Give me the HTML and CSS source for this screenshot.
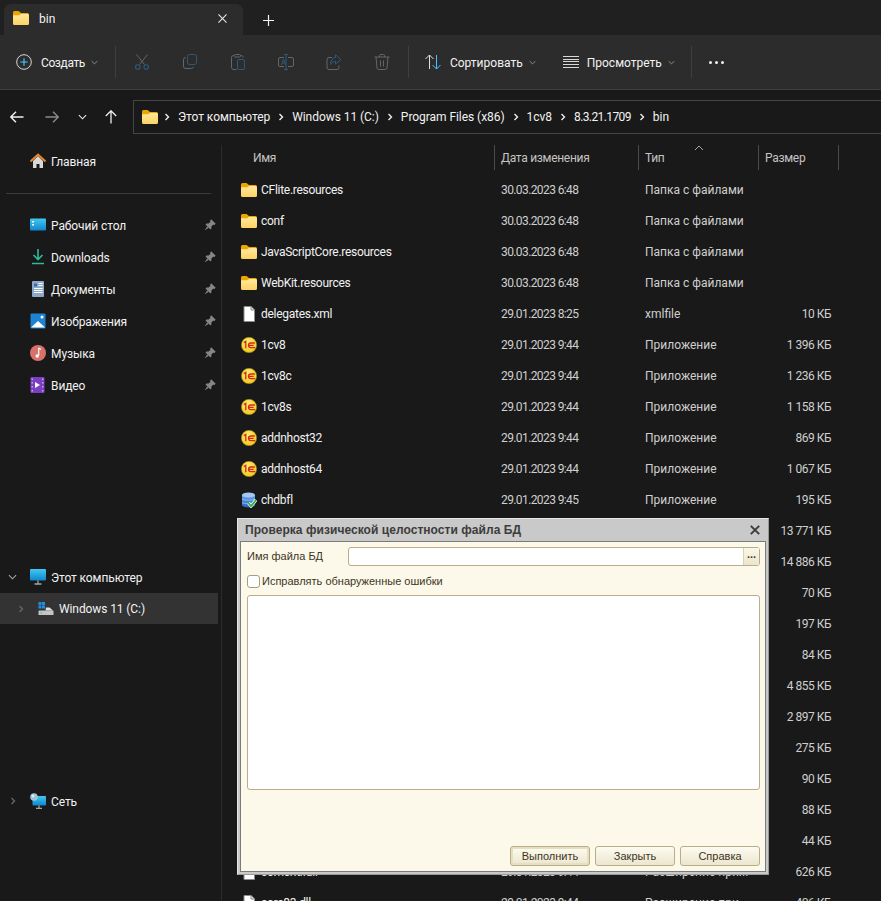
FILE: index.html
```html
<!DOCTYPE html>
<html lang="ru">
<head>
    <meta charset="UTF-8">
    <meta name="viewport" content="width=device-width, initial-scale=1.0">
    <title>bin - Проводник</title>
    <link rel="stylesheet" href="styles.css">
</head>
<body>
    <!-- shared icons -->
    <svg class="sprite" aria-hidden="true">
        <defs>
            <linearGradient id="folderFill" x1="0" y1="0" x2="0" y2="1">
                <stop offset="0" stop-color="#ffe99c"/>
                <stop offset="1" stop-color="#fdd263"/>
            </linearGradient>
            <radialGradient id="coinFill" cx="0.45" cy="0.35" r="0.7">
                <stop offset="0" stop-color="#fff27a"/>
                <stop offset="1" stop-color="#f2c412"/>
            </radialGradient>
            <linearGradient id="dbFill" x1="0" y1="0" x2="0" y2="1">
                <stop offset="0" stop-color="#6fa6ec"/>
                <stop offset="1" stop-color="#2b62c0"/>
            </linearGradient>
            <linearGradient id="screenFill" x1="0" y1="0" x2="0" y2="1">
                <stop offset="0" stop-color="#43c8f0"/>
                <stop offset="1" stop-color="#0f86cf"/>
            </linearGradient>
        </defs>
        <symbol id="i-folder" viewBox="0 0 16 14">
            <path d="M0 1.5A1.5 1.5 0 0 1 1.5 0h4L8 2h6.5A1.5 1.5 0 0 1 16 3.5V5H0z" fill="#eba700"/>
            <path d="M0 4.2h6L8 3h6.5A1.5 1.5 0 0 1 16 4.5v8a1.5 1.5 0 0 1-1.5 1.5h-13A1.5 1.5 0 0 1 0 12.5z" fill="url(#folderFill)"/>
        </symbol>
        <symbol id="i-file" viewBox="0 0 16 16">
            <path d="M3 .5h7l3.5 3.5v11.5H3z" fill="#fff" stroke="#8a8a8a"/>
            <path d="M10 .5V4h3.5" fill="#ddd" stroke="#8a8a8a"/>
        </symbol>
        <symbol id="i-onec" viewBox="0 0 16 16">
            <circle cx="8" cy="8" r="7.7" fill="url(#coinFill)" stroke="#8f7a1a" stroke-width=".5"/>
            <path d="M2.800 5.600 4.800 4.400v6.800" fill="none" stroke="#d8261c" stroke-width="1.300"/>
            <path d="M13.800 6H9.800a2.300 2.300 0 0 0 0 4.600h4.400M8.200 8.300h4.400" fill="none" stroke="#d8261c" stroke-width="1.300"/>
        </symbol>
        <symbol id="i-db" viewBox="0 0 16 16">
            <path d="M1 3v10c0 1.400 3 2.400 6.500 2.400S14 14.400 14 13V3z" fill="url(#dbFill)"/>
            <ellipse cx="7.500" cy="3" rx="6.500" ry="2.500" fill="#a5c8f2"/>
            <path d="M1 7c1.500 1.600 11.500 1.600 13 0M1 10.500c1.500 1.600 11.500 1.600 13 0" fill="none" stroke="#a5c8f2" stroke-width=".7"/>
            <path d="m7.500 11 2.500 3 5-6" fill="none" stroke="#fff" stroke-width="3.200"/>
            <path d="m7.500 11 2.500 3 5-6" fill="none" stroke="#27b13b" stroke-width="1.800"/>
        </symbol>
        <symbol id="i-pin" viewBox="0 0 12 12">
            <path d="M7.200 .3 11.700 4.800 10.300 5.900 9.100 5.700 7.400 7.500 7.400 9.600 6.400 10.500 1.500 5.600 2.400 4.600 4.500 4.600 6.300 2.900 6.100 1.700z" fill="#858585"/>
            <path d="M3.300 7.300.5 11.500 4.700 8.700z" fill="#858585"/>
        </symbol>
        <symbol id="i-chev" viewBox="0 0 6 8">
            <path d="m1.500 1 3 3-3 3" fill="none" stroke="currentColor" stroke-width="1.400"/>
        </symbol>
        <symbol id="i-down" viewBox="0 0 10 6">
            <path d="m1 1 4 4 4-4" fill="none" stroke="currentColor" stroke-width="1.200"/>
        </symbol>
    </svg>

    <div class="tabbar">
        <div class="tab">
            <svg class="tab-icon"><use href="#i-folder"/></svg>
            <span class="tab-title">bin</span>
            <svg class="tab-close" viewBox="0 0 10 10"><path d="m.5.500 9 9m0-9-9 9" stroke="#e8e8e8" stroke-width="1.200"/></svg>
        </div>
        <svg class="tab-add" viewBox="0 0 11 11"><path d="M5.500 0v11M0 5.500h11" stroke="#f2f2f2" stroke-width="1.200"/></svg>
    </div>

    <div class="toolbar">
        <div class="tool tool-new">
            <svg class="tool-icon" viewBox="0 0 16 16">
                <circle cx="8" cy="8" r="7.300" fill="none" stroke="#d8d8d8" stroke-width="1"/>
                <path d="M8 4.200v7.600M4.200 8h7.600" stroke="#4cc2ff" stroke-width="1.200"/>
            </svg>
            <span>Создать</span>
            <svg class="drop"><use href="#i-down"/></svg>
        </div>
        <div class="tool-sep"></div>
        <div class="tool-group">
            <svg class="tool-icon" viewBox="0 0 16 16">
                <path d="M2.500 .5 10.500 10.500M13.500 .5 5.500 10.500" fill="none" stroke="#666" stroke-width="1"/>
                <circle cx="3.800" cy="13" r="2.300" fill="none" stroke="#2c5a7c" stroke-width="1.100"/>
                <circle cx="12.200" cy="13" r="2.300" fill="none" stroke="#2c5a7c" stroke-width="1.100"/>
            </svg>
            <svg class="tool-icon" viewBox="0 0 16 16">
                <rect x="5.500" y=".5" width="9" height="10" rx="2" fill="none" stroke="#2c5a7c"/>
                <path d="M3.500 3.500a2 2 0 0 0-2 2v7a2 2 0 0 0 2 2h6a2 2 0 0 0 1.800-1.500" fill="none" stroke="#666"/>
            </svg>
            <svg class="tool-icon" viewBox="0 0 16 16">
                <path d="M4.500 1.500h-1a2 2 0 0 0-2 2v10a2 2 0 0 0 2 2h3M10.500 1.500h1a2 2 0 0 1 1.500 1v1" fill="none" stroke="#666"/>
                <rect x="4.500" y=".5" width="6" height="2.500" rx="1" fill="none" stroke="#666"/>
                <rect x="7.500" y="5.500" width="7" height="10" rx="1.500" fill="none" stroke="#2c5a7c"/>
            </svg>
            <svg class="tool-icon" viewBox="0 0 16 16">
                <path d="M6 3.500H2a1.500 1.500 0 0 0-1.500 1.500v6A1.500 1.500 0 0 0 2 12.500h4M10 3.500h4A1.500 1.500 0 0 1 15.500 5v6a1.500 1.500 0 0 1-1.500 1.500h-4" fill="none" stroke="#666"/>
                <path d="M8 .5v15M6 .5h4M6 15.500h4" fill="none" stroke="#2c5a7c"/>
                <path d="m3.500 11 2-6 2 6M4.300 9h2.400" fill="none" stroke="#2c5a7c" stroke-width=".9"/>
            </svg>
            <svg class="tool-icon" viewBox="0 0 16 16">
                <path d="M6 3.500H3a2 2 0 0 0-2 2v8a2 2 0 0 0 2 2h8a2 2 0 0 0 2-2v-2" fill="none" stroke="#666"/>
                <path d="M9.500 .8 15 5.500 9.500 10V7.500C7 7.500 5.500 8.500 4.500 10.500 4.500 6.500 6.500 4 9.500 3.500z" fill="none" stroke="#2c5a7c"/>
            </svg>
            <svg class="tool-icon" viewBox="0 0 16 16">
                <path d="M.5 3h15M5.500 3V1.500a1 1 0 0 1 1-1h3a1 1 0 0 1 1 1V3M2 3l1 11a1.700 1.700 0 0 0 1.700 1.500h6.600A1.700 1.700 0 0 0 13 14l1-11M6.500 6.500v6M9.500 6.500v6" fill="none" stroke="#666"/>
            </svg>
        </div>
        <div class="tool-sep tool-sep-b"></div>
        <div class="tool tool-sort">
            <svg class="tool-icon" viewBox="0 0 16 16">
                <path d="M4.500 15V1M.5 5l4-4 4 4" fill="none" stroke="#e0e0e0"/>
                <path d="M11.500 1v14M7.500 11l4 4 4-4" fill="none" stroke="#4cc2ff"/>
            </svg>
            <span>Сортировать</span>
            <svg class="drop"><use href="#i-down"/></svg>
        </div>
        <div class="tool tool-view">
            <svg class="tool-icon" viewBox="0 0 16 12">
                <path d="M0 .5h16M0 3.500h16M0 5.500h16M0 8.500h16M0 11.500h16" stroke="#d8d8d8"/>
            </svg>
            <span>Просмотреть</span>
            <svg class="drop"><use href="#i-down"/></svg>
        </div>
        <div class="tool-sep tool-sep-c"></div>
        <div class="more"><i></i><i></i><i></i></div>
    </div>

    <div class="addressbar">
        <div class="nav">
            <svg class="nav-back" viewBox="0 0 14 12"><path d="M13.500 6H1M6 .8 .8 6 6 11.200" fill="none" stroke="#f0f0f0" stroke-width="1.400"/></svg>
            <svg class="nav-fwd" viewBox="0 0 14 12"><path d="M.5 6H13M8 .8 13.200 6 8 11.200" fill="none" stroke="#8a8a8a" stroke-width="1.400"/></svg>
            <svg class="nav-down"><use href="#i-down"/></svg>
            <svg class="nav-up" viewBox="0 0 12 14"><path d="M6 13.500V1M.8 6 6 .8 11.200 6" fill="none" stroke="#f0f0f0" stroke-width="1.300"/></svg>
        </div>
        <div class="crumbs">
            <svg class="crumb-folder"><use href="#i-folder"/></svg>
            <svg class="chev"><use href="#i-chev"/></svg><span>Этот компьютер</span>
            <svg class="chev"><use href="#i-chev"/></svg><span>Windows 11 (C:)</span>
            <svg class="chev"><use href="#i-chev"/></svg><span>Program Files (x86)</span>
            <svg class="chev"><use href="#i-chev"/></svg><span>1cv8</span>
            <svg class="chev"><use href="#i-chev"/></svg><span class="crumb-num">8.3.21.1709</span>
            <svg class="chev"><use href="#i-chev"/></svg><span>bin</span>
        </div>
    </div>

    <div class="main">
        <nav class="sidebar">
            <div class="side-item">
                <svg class="side-icon" viewBox="0 0 16 16">
                    <path d="M3 8v7h3.500v-4h3v4H13V8L8 3z" fill="#d9d9d9"/>
                    <path d="M.5 8.500 8 1.500l7.500 7" fill="none" stroke="#e8862a" stroke-width="2"/>
                </svg>
                <span>Главная</span>
            </div>
            <div class="side-line"></div>
            <div class="side-item">
                <svg class="side-icon" viewBox="0 0 16 16">
                    <rect y="1.500" width="16" height="12" rx="1" fill="url(#screenFill)"/>
                    <path d="M2 4h2v1.500H2zM2 7h2v1.500H2z" fill="#fff"/>
                </svg>
                <span>Рабочий стол</span>
                <svg class="pin"><use href="#i-pin"/></svg>
            </div>
            <div class="side-item">
                <svg class="side-icon" viewBox="0 0 16 16">
                    <path d="M8 0v10M3.500 6 8 10.500 12.500 6M2 14.500h12" fill="none" stroke="#2dbb99" stroke-width="1.600"/>
                </svg>
                <span>Downloads</span>
                <svg class="pin"><use href="#i-pin"/></svg>
            </div>
            <div class="side-item">
                <svg class="side-icon" viewBox="0 0 16 16">
                    <rect x="2" y="0" width="12" height="16" rx="1" fill="#8fa9c8"/>
                    <path d="M4 2.500h3v3H4z" fill="#3f6ea6"/>
                    <path d="M8.500 2.500h4M8.500 4.500h4M4 7.500h8.500M4 9.500h8.500M4 11.500h8.500" stroke="#fff" stroke-width="1"/>
                </svg>
                <span>Документы</span>
                <svg class="pin"><use href="#i-pin"/></svg>
            </div>
            <div class="side-item">
                <svg class="side-icon" viewBox="0 0 16 16">
                    <rect x=".5" y=".5" width="15" height="15" rx="1" fill="#1b83d4"/>
                    <path d="M1 14.500 8 8l7 6.500z" fill="#fff"/>
                    <circle cx="12" cy="4" r="1.500" fill="#fff"/>
                </svg>
                <span>Изображения</span>
                <svg class="pin"><use href="#i-pin"/></svg>
            </div>
            <div class="side-item">
                <svg class="side-icon" viewBox="0 0 16 16">
                    <circle cx="8" cy="8" r="8" fill="#d9716a"/>
                    <path d="M8.700 3v7.500" stroke="#fff" stroke-width="1.200"/>
                    <path d="M8.700 3 11 4.500" stroke="#fff" stroke-width="1.200"/>
                    <circle cx="7.200" cy="11" r="1.700" fill="#fff"/>
                </svg>
                <span>Музыка</span>
                <svg class="pin"><use href="#i-pin"/></svg>
            </div>
            <div class="side-item">
                <svg class="side-icon" viewBox="0 0 16 16">
                    <rect x=".5" width="14" height="16" rx="1" fill="#7b3fc4"/>
                    <path d="M5 5v6l5-3z" fill="#fff"/>
                    <path d="M1.500 1.500h1.500v1.500H1.500zM1.500 5h1.500v1.500H1.500zM1.500 9h1.500v1.500H1.500zM1.500 13h1.500v1.500H1.500zM12 1.500h1.500v1.500H12zM12 5h1.500v1.500H12zM12 9h1.500v1.500H12zM12 13h1.500v1.500H12z" fill="#c9a5ee"/>
                </svg>
                <span>Видео</span>
                <svg class="pin"><use href="#i-pin"/></svg>
            </div>

            <div class="side-item side-pc">
                <svg class="side-arrow side-arrow-open"><use href="#i-down"/></svg>
                <svg class="side-icon" viewBox="0 0 16 16">
                    <rect y="0" width="16" height="11.500" rx="1" fill="url(#screenFill)"/>
                    <path d="M8 11.500v3M4.500 15h7" stroke="#9aa7ae" stroke-width="1.300"/>
                </svg>
                <span>Этот компьютер</span>
            </div>
            <div class="side-item side-drive">
                <svg class="side-arrow side-arrow-shut"><use href="#i-chev"/></svg>
                <svg class="side-icon" viewBox="0 0 16 16">
                    <path d="M.5 1h3v3h-3zM4 1h3v3H4zM.5 4.500h3v3h-3zM4 4.500h3v3H4z" fill="#1f8fe0"/>
                    <path d="M8 6.500h3.500l3.500 3H7.500z" fill="#e2e2e2"/>
                    <rect x=".5" y="9.500" width="15" height="4.500" rx=".6" fill="#c4c4c4"/>
                    <path d="M2.500 12h1.500" stroke="#33c24a" stroke-width="1.200"/>
                </svg>
                <span>Windows 11 (C:)</span>
            </div>
            <div class="side-item side-net">
                <svg class="side-arrow side-arrow-net"><use href="#i-chev"/></svg>
                <svg class="side-icon" viewBox="0 0 16 16">
                    <rect x="2.500" y="3" width="13.500" height="9.500" rx=".8" fill="url(#screenFill)"/>
                    <path d="M9 12.500v2.500M6 15.500h6" stroke="#9aa7ae" stroke-width="1.300"/>
                    <circle cx="4" cy="4" r="3.800" fill="#9cc6d8"/>
                    <circle cx="3" cy="3" r="1.400" fill="#dcedf4"/>
                </svg>
                <span>Сеть</span>
            </div>
        </nav>

        <section class="files">
            <div class="head">
                <div class="head-cell head-name">Имя</div>
                <div class="head-cell head-date">Дата изменения</div>
                <div class="head-cell head-type">Тип
                    <svg class="sort-up" viewBox="0 0 10 6"><path d="m1 5 4-4 4 4" fill="none" stroke="#a8a8a8" stroke-width="1"/></svg>
                </div>
                <div class="head-cell head-size">Размер</div>
            </div>

            <div class="row"><div class="name"><svg class="file-icon folder"><use href="#i-folder"/></svg>CFlite.resources</div><div class="date">30.03.2023 6:48</div><div class="type">Папка с файлами</div><div class="size"></div></div>
            <div class="row"><div class="name"><svg class="file-icon folder"><use href="#i-folder"/></svg>conf</div><div class="date">30.03.2023 6:48</div><div class="type">Папка с файлами</div><div class="size"></div></div>
            <div class="row"><div class="name"><svg class="file-icon folder"><use href="#i-folder"/></svg>JavaScriptCore.resources</div><div class="date">30.03.2023 6:48</div><div class="type">Папка с файлами</div><div class="size"></div></div>
            <div class="row"><div class="name"><svg class="file-icon folder"><use href="#i-folder"/></svg>WebKit.resources</div><div class="date">30.03.2023 6:48</div><div class="type">Папка с файлами</div><div class="size"></div></div>
            <div class="row"><div class="name"><svg class="file-icon"><use href="#i-file"/></svg>delegates.xml</div><div class="date">29.01.2023 8:25</div><div class="type">xmlfile</div><div class="size">10 КБ</div></div>
            <div class="row"><div class="name"><svg class="file-icon"><use href="#i-onec"/></svg>1cv8</div><div class="date">29.01.2023 9:44</div><div class="type">Приложение</div><div class="size">1 396 КБ</div></div>
            <div class="row"><div class="name"><svg class="file-icon"><use href="#i-onec"/></svg>1cv8c</div><div class="date">29.01.2023 9:44</div><div class="type">Приложение</div><div class="size">1 236 КБ</div></div>
            <div class="row"><div class="name"><svg class="file-icon"><use href="#i-onec"/></svg>1cv8s</div><div class="date">29.01.2023 9:44</div><div class="type">Приложение</div><div class="size">1 158 КБ</div></div>
            <div class="row"><div class="name"><svg class="file-icon"><use href="#i-onec"/></svg>addnhost32</div><div class="date">29.01.2023 9:44</div><div class="type">Приложение</div><div class="size">869 КБ</div></div>
            <div class="row"><div class="name"><svg class="file-icon"><use href="#i-onec"/></svg>addnhost64</div><div class="date">29.01.2023 9:44</div><div class="type">Приложение</div><div class="size">1 067 КБ</div></div>
            <div class="row"><div class="name"><svg class="file-icon"><use href="#i-db"/></svg>chdbfl</div><div class="date">29.01.2023 9:45</div><div class="type">Приложение</div><div class="size">195 КБ</div></div>
            <!-- these rows sit behind the dialog, only the size shows -->
            <div class="row"><div class="name"></div><div class="date"></div><div class="type"></div><div class="size">13 771 КБ</div></div>
            <div class="row"><div class="name"></div><div class="date"></div><div class="type"></div><div class="size">14 886 КБ</div></div>
            <div class="row"><div class="name"></div><div class="date"></div><div class="type"></div><div class="size">70 КБ</div></div>
            <div class="row"><div class="name"></div><div class="date"></div><div class="type"></div><div class="size">197 КБ</div></div>
            <div class="row"><div class="name"></div><div class="date"></div><div class="type"></div><div class="size">84 КБ</div></div>
            <div class="row"><div class="name"></div><div class="date"></div><div class="type"></div><div class="size">4 855 КБ</div></div>
            <div class="row"><div class="name"></div><div class="date"></div><div class="type"></div><div class="size">2 897 КБ</div></div>
            <div class="row"><div class="name"></div><div class="date"></div><div class="type"></div><div class="size">275 КБ</div></div>
            <div class="row"><div class="name"></div><div class="date"></div><div class="type"></div><div class="size">90 КБ</div></div>
            <div class="row"><div class="name"></div><div class="date"></div><div class="type"></div><div class="size">88 КБ</div></div>
            <div class="row"><div class="name"></div><div class="date"></div><div class="type"></div><div class="size">44 КБ</div></div>
            <div class="row"><div class="name"><svg class="file-icon"><use href="#i-file"/></svg>comcntr.dll</div><div class="date">29.01.2023 9:44</div><div class="type">Расширение при...</div><div class="size">626 КБ</div></div>
            <div class="row"><div class="name"><svg class="file-icon"><use href="#i-file"/></svg>core83.dll</div><div class="date">29.01.2023 9:44</div><div class="type">Расширение при...</div><div class="size">406 КБ</div></div>
        </section>
    </div>

    <div class="dialog">
        <div class="dialog-title">
            <span>Проверка физической целостности файла БД</span>
            <svg class="dialog-close" viewBox="0 0 10 10"><path d="m.8.800 8.400 8.400m0-8.400-8.400 8.400" stroke="#3a3a3a" stroke-width="1.900"/></svg>
        </div>
        <div class="dialog-body">
            <div class="field">
                <label class="field-label">Имя файла БД</label>
                <div class="field-input"><div class="field-btn">...</div></div>
            </div>
            <div class="check">
                <div class="check-box"></div>
                <span>Исправлять обнаруженные ошибки</span>
            </div>
            <div class="log"></div>
            <div class="actions">
                <div class="btn btn-default">Выполнить</div>
                <div class="btn">Закрыть</div>
                <div class="btn">Справка</div>
            </div>
        </div>
    </div>
</body>
</html>
```

FILE: styles.css
```css
html, body {
    margin: 0;
    width: 881px;
    height: 901px;
    overflow: hidden;
}
body {
    position: relative;
    background: #191919;
    color: #f2f2f2;
    font-family: Roboto, "Open Sans", sans-serif;
    font-size: 12px;
}
svg { display: block; flex: none; }
.sprite { position: absolute; width: 0; height: 0; }

/* tabs */
.tabbar {
    height: 35px;
    background: #202020;
    display: flex;
    align-items: flex-end;
}
.tab {
    width: 239px;
    height: 31px;
    margin-left: 4px;
    background: #2c2c2c;
    border-radius: 7px 7px 0 0;
    display: flex;
    align-items: center;
}
.tab-icon { width: 16px; height: 14px; margin: 0 0 3px 9px; }
.tab-title { margin: 0 0 2px 10px; flex: 1; }
.tab-close { width: 9px; height: 9px; margin: 0 16px 3px 0; }
.tab-add { width: 11px; height: 11px; margin: 0 0 9px 20px; }

/* toolbar */
.toolbar {
    height: 54px;
    background: #2c2c2c;
    border-bottom: 1px solid #3f3f3f;
    display: flex;
    align-items: center;
    padding-left: 16px;
}
.tool { display: flex; align-items: center; }
.tool-icon { width: 16px; height: 16px; }
.tool span { margin-left: 9px; padding-top: 2px; }
.tool-new span { letter-spacing: -0.4px; }
.drop { width: 7px; height: 5px; margin-left: 6px; color: #a0a0a0; }
.tool-sep { width: 1px; height: 32px; background: #3f3f3f; margin-left: 17px; }
.tool-group { display: flex; gap: 32px; margin-left: 18px; }
.tool-sep-b { margin-left: 18px; }
.tool-sort { margin-left: 16px; }
.tool-view { margin-left: 27px; }
.tool-view .tool-icon { height: 12px; }
.tool-view span { margin-left: 8px; }
.tool-sep-c { margin-left: 16px; }
.more { display: flex; gap: 3px; margin-left: 17px; padding-top: 1px; }
.more i { width: 3px; height: 3px; border-radius: 50%; background: #f0f0f0; }

/* address row */
.addressbar {
    height: 55px;
    display: flex;
    align-items: center;
    padding-bottom: 2px;
    box-sizing: border-box;
}
.nav { width: 133px; display: flex; align-items: center; padding-left: 10px; box-sizing: border-box; }
.nav-back, .nav-fwd { width: 14px; height: 12px; }
.nav-fwd { margin-left: 21px; }
.nav-down { width: 9px; height: 6px; margin-left: 19px; color: #eee; }
.nav-up { width: 12px; height: 14px; margin-left: 18px; }
.crumbs {
    flex: 1;
    height: 34px;
    border: 1px solid #454545;
    border-right: 0;
    box-sizing: border-box;
    display: flex;
    align-items: center;
    padding-left: 8px;
    letter-spacing: -0.05px;
}
.crumb-folder { width: 16px; height: 14px; margin-right: 6px; }
.chev { width: 6px; height: 8px; color: #eee; }
.crumbs span { margin: 0 8px 0 8px; }
.crumbs .crumb-num { letter-spacing: -0.6px; }

/* body: sidebar + list */
.main { display: flex; height: 756px; overflow: hidden; }
.sidebar {
    width: 218px;
    margin-right: 3px;
    flex: none;
    letter-spacing: -0.1px;
}
.side-item {
    height: 32px;
    display: flex;
    align-items: center;
    padding-left: 30px;
    position: relative;
}
.side-item span { margin-left: 5px; padding-top: 1px; }
.side-icon { width: 16px; height: 16px; }
.side-line { height: 1px; background: #3a3a3a; margin: 16px 7px 15px 6px; }
.pin { width: 12px; height: 12px; position: absolute; right: 2px; top: 10px; }
.side-pc { margin-top: 160px; }
.side-drive { background: #333; height: 31px; padding-left: 38px; }
.side-net { margin-top: 161px; }
.side-arrow { position: absolute; color: #a8a8a8; }
.side-arrow-open { width: 9px; height: 6px; left: 8px; top: 13px; }
.side-arrow-shut { width: 6px; height: 8px; left: 18px; top: 12px; color: #666; }
.side-arrow-net { width: 6px; height: 8px; left: 10px; top: 12px; color: #666; }

.files {
    flex: 1;
    border-left: 1px solid #2b2b2b;
    padding-left: 11px;
}
.head { height: 25px; display: flex; color: #c4c4c4; margin-bottom: 4px; letter-spacing: -0.3px; }
.head-cell { height: 25px; line-height: 27px; box-sizing: border-box; padding-left: 6px; position: relative; }
.head-name { width: 261px; padding-left: 20px; }
.head-date, .head-type, .head-size { border-left: 1px solid #4a4a4a; }
.head-date { width: 144px; }
.head-type { width: 120px; }
.head-size { width: 81px; border-right: 1px solid #4a4a4a; }
.sort-up { position: absolute; left: 55px; top: 0; width: 10px; height: 6px; }

.row {
    height: 31px;
    display: grid;
    grid-template-columns: 260px 144px 120px 66px;
    align-items: center;
    margin-left: 8px;
}
.name { display: flex; align-items: center; gap: 4px; letter-spacing: -0.28px; }
.file-icon { width: 16px; height: 16px; }
.file-icon.folder { height: 14px; }
.date, .type, .size { color: #cfcfcf; }
.date { letter-spacing: -0.6px; }
.size { text-align: right; letter-spacing: -0.5px; }

/* 1C dialog, floats over the explorer */
.dialog {
    position: absolute;
    left: 237px;
    top: 518px;
    width: 532px;
    height: 357px;
    box-sizing: border-box;
    background: #c9c9c9;
    border: 1px solid #e6e6e6;
    border-right-color: #9a9a9a;
    border-bottom-color: #9a9a9a;
    padding: 0 2px 2px;
    display: flex;
    flex-direction: column;
    font-family: "Liberation Sans", Arial, sans-serif;
    font-size: 11px;
    color: #3d3524;
}
.dialog-title {
    height: 22px;
    flex: none;
    display: flex;
    align-items: center;
    justify-content: space-between;
    padding: 0 6px 0 5px;
    font-weight: bold;
    font-size: 12px;
    letter-spacing: 0.05px;
    color: #3c3c3c;
}
.dialog-close { width: 10px; height: 10px; }
.dialog-body {
    flex: 1;
    background: #fcf9ea;
    border: 1px solid #7a7a7a;
    padding: 5px 5px 5px 6px;
    display: flex;
    flex-direction: column;
}
.field { display: flex; align-items: flex-start; height: 20px; }
.field-label { width: 101px; line-height: 19px; }
.field-input {
    flex: 1;
    height: 19px;
    box-sizing: border-box;
    background: #fff;
    border: 1px solid #b8ae8a;
    border-radius: 3px;
    display: flex;
    justify-content: flex-end;
}
.field-btn {
    width: 15px;
    background: linear-gradient(#fbf8e8, #ebe5cc);
    border-left: 1px solid #d8d1b4;
    font-weight: bold;
    line-height: 13px;
    text-align: center;
}
.check { display: flex; align-items: center; gap: 2px; margin-top: 7px; height: 14px; }
.check-box {
    width: 13px;
    height: 13px;
    box-sizing: border-box;
    background: #fff;
    border: 1px solid #a89f7c;
    border-radius: 3px;
}
.log {
    height: 195px;
    box-sizing: border-box;
    margin-top: 7px;
    background: #fff;
    border: 1px solid #b8ae8a;
    border-radius: 3px;
}
.actions { display: flex; justify-content: flex-end; gap: 5px; margin-top: auto; }
.btn {
    width: 80px;
    height: 20px;
    box-sizing: border-box;
    border: 1px solid #b8ae8a;
    border-radius: 3px;
    background: linear-gradient(#fdfbf1, #ece6ce);
    line-height: 18px;
    text-align: center;
}
.btn-default { box-shadow: inset 0 0 0 2px #e6dfc2; }
```
